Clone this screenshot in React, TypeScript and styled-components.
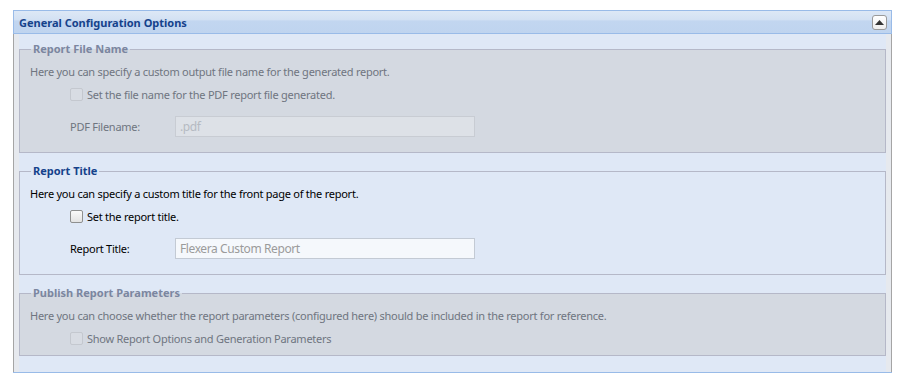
import styled, { createGlobalStyle } from "styled-components";

const Global = createGlobalStyle`
	body {
		margin: 0;
		background: #ffffff;
		font-family: "Noto Sans", "Liberation Sans", sans-serif;
		font-size: 11px;
		letter-spacing: -0.25px;
	}
`;

const Page = styled.div`
	padding: 10px 12px 16px 13px;
`;

const Panel = styled.div`
	border: 1px solid #99bbe8;
	background: #dfe8f6;
`;

const Header = styled.div`
	height: 22px;
	display: flex;
	align-items: center;
	justify-content: space-between;
	padding: 0 4px 0 5px;
	background: linear-gradient(to bottom, #dde8f6 0%, #d3e1f3 40%, #c2d6f0 45%, #bfd4ef 100%);
	border-bottom: 1px solid #99bbe8;
`;

const Title = styled.span`
	font-weight: bold;
	font-size: 11px;
	letter-spacing: 0;
	color: #15428b;
`;

const Toggle = styled.button`
	width: 15px;
	height: 15px;
	padding: 0;
	border: 1px solid #9a9a9a;
	border-radius: 3px;
	background: linear-gradient(to bottom, #ffffff, #eeeeee);
	display: flex;
	align-items: center;
	justify-content: center;
`;

const Body = styled.div`
	border-left: 1px solid #a5a5a5;
	border-right: 1px solid #a5a5a5;
	margin: 0 -1px;
	display: flex;
	flex-direction: column;
	gap: 11px;
	padding: 8px 5px 16px 5px;
	box-shadow: inset 5px 0 0 #e6e9ee, inset -5px 0 0 #e6e9ee;
`;

const Fieldset = styled.fieldset<{ disabled?: boolean; $bottom?: number }>`
	margin: 0;
	padding: 0 10px ${(p) => p.$bottom ?? 15}px 10px;
	border: 1px solid #b5b8c8;
	background: ${(p) => (p.disabled ? "#d4d9e1" : "transparent")};
	color: ${(p) => (p.disabled ? "#6f7580" : "#000000")};
	min-width: 0;
`;

const Legend = styled.legend<{ disabled?: boolean }>`
	padding: 0 2px;
	margin-left: 1px;
	font-weight: bold;
	font-size: 11px;
	letter-spacing: 0;
	line-height: 14px;
	color: ${(p) => (p.disabled ? "#7b86a0" : "#15428b")};
`;

const Description = styled.div`
	line-height: 16px;
	margin-top: 8px;
	margin-bottom: 6px;
`;

const CheckRow = styled.label`
	display: flex;
	align-items: center;
	gap: 4px;
	margin-left: 40px;
	height: 16px;
`;

const Box = styled.span<{ disabled?: boolean }>`
	width: 11px;
	height: 11px;
	border: 1px solid ${(p) => (p.disabled ? "#c4c8cf" : "#8e8f8f")};
	border-radius: 2px;
	background: ${(p) => (p.disabled ? "#d8dce3" : "linear-gradient(to bottom, #fafafa, #e3e3e3)")};
`;

const FieldRow = styled.div`
	display: flex;
	align-items: center;
	margin: 14px 0 0 40px;
`;

const FieldLabel = styled.span`
	width: 105px;
`;

const Input = styled.div<{ disabled?: boolean }>`
	width: 290px;
	height: 19px;
	padding: 0 4px;
	display: flex;
	align-items: center;
	font-size: 12px;
	letter-spacing: -0.4px;
	border: 1px solid ${(p) => (p.disabled ? "#c8ccd3" : "#c3cad4")};
	background: ${(p) => (p.disabled ? "#dde1e7" : "#f5f8fc")};
	color: ${(p) => (p.disabled ? "#b5bac2" : "#9b9b9b")};
`;

const Arrow = () => (
	<svg width="9" height="5" viewBox="0 0 9 5">
		<path d="M0 5 L4.5 0 L9 5 Z" fill="#333" />
	</svg>
);

export default function App() {
	return (
		<Page>
			<Global />
			<Panel>
				<Header>
					<Title>General Configuration Options</Title>
					<Toggle>
						<Arrow />
					</Toggle>
				</Header>
				<Body>
					<Fieldset disabled>
						<Legend disabled>Report File Name</Legend>
						<Description>Here you can specify a custom output file name for the generated report.</Description>
						<CheckRow>
							<Box disabled />
							Set the file name for the PDF report file generated.
						</CheckRow>
						<FieldRow>
							<FieldLabel>PDF Filename:</FieldLabel>
							<Input disabled>.pdf</Input>
						</FieldRow>
					</Fieldset>
					<Fieldset>
						<Legend>Report Title</Legend>
						<Description>Here you can specify a custom title for the front page of the report.</Description>
						<CheckRow>
							<Box />
							Set the report title.
						</CheckRow>
						<FieldRow>
							<FieldLabel>Report Title:</FieldLabel>
							<Input>Flexera Custom Report</Input>
						</FieldRow>
					</Fieldset>
					<Fieldset disabled $bottom={9}>
						<Legend disabled>Publish Report Parameters</Legend>
						<Description>
							Here you can choose whether the report parameters (configured here) should be included in the report for reference.
						</Description>
						<CheckRow>
							<Box disabled />
							Show Report Options and Generation Parameters
						</CheckRow>
					</Fieldset>
				</Body>
			</Panel>
		</Page>
	);
}
